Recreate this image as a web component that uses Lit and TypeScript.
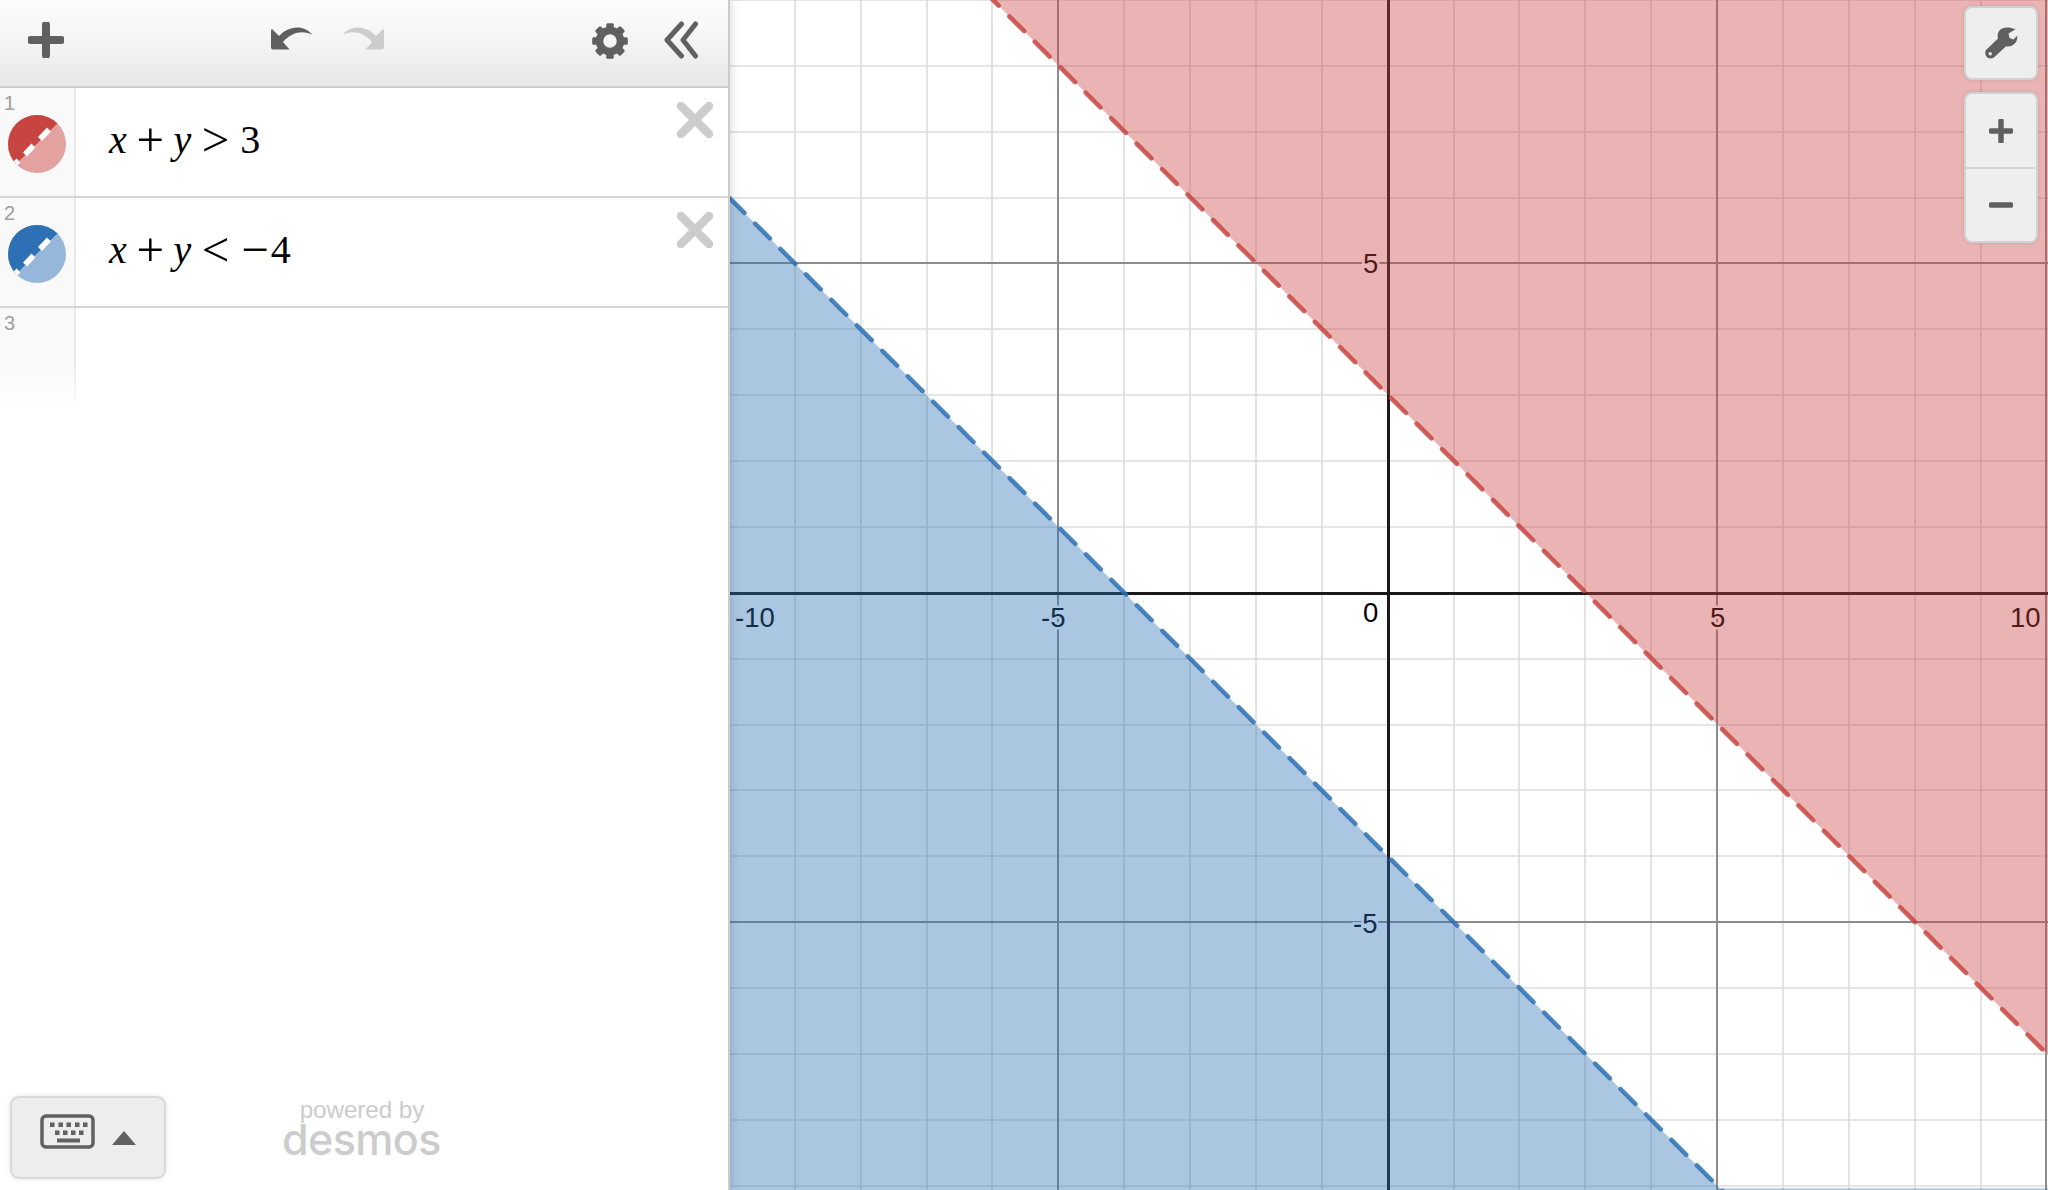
import { LitElement, css, html, svg } from 'lit'
import { customElement } from 'lit/decorators.js'

// graph coordinates -> page pixels (the svg viewBox is in page pixels too)
const OX = 1387.7
const OY = 592.8
const UNIT = 65.87
const px = (x: number) => Math.round(OX + x * UNIT)
const py = (y: number) => Math.round(OY - y * UNIT)

const range = (a: number, b: number) => {
  const out: number[] = []
  for (let i = a; i <= b; i++) out.push(i)
  return out
}

const swatch = (dark: string, light: string, id: string) => html`
  <svg class="swatch" width="58" height="58" viewBox="0 0 58 58">
    <defs><clipPath id=${id}><circle cx="29" cy="29" r="29"></circle></clipPath></defs>
    <g clip-path="url(#${id})">
      <rect width="58" height="58" fill=${light}></rect>
      <path d="M0 0H58L0 57Z" fill=${dark}></path>
      <path d="M41 14.5L32 24M25.5 30.5L17 39.5M10.5 45.5L2 54" stroke="#fff" stroke-width="5.5" fill="none"></path>
    </g>
  </svg>
`

const closeIcon = html`
  <svg class="close" width="36" height="36" viewBox="0 0 36 36">
    <path d="M4 4L32 32M32 4L4 32" stroke="#ccc" stroke-width="8.5" stroke-linecap="round"></path>
  </svg>
`

@customElement('app-root')
export class AppRoot extends LitElement {
  static styles = css`
    :host {
      display: flex;
      width: 100%;
      height: 1190px;
      overflow: hidden;
      background: #fff;
      font-family: "Liberation Sans", Arial, sans-serif;
    }
    .panel {
      position: relative;
      z-index: 2;
      width: 730px;
      flex: none;
      box-sizing: border-box;
      display: flex;
      flex-direction: column;
      background: #fff;
      border-right: 2px solid #ccc;
      box-shadow: 0 0 10px rgba(0, 0, 0, 0.18);
    }
    .header {
      height: 88px;
      flex: none;
      box-sizing: border-box;
      display: flex;
      align-items: center;
      padding-left: 28px;
      background: linear-gradient(#fdfdfd, #f5f5f5 45%, #e8e8e8);
      border-bottom: 2px solid #ccc;
    }
    .header svg {
      display: block;
      flex: none;
    }
    .add { margin-right: 207px; margin-top: -6px; }
    .undo { margin-right: 29px; margin-top: -11px; }
    .redo { margin-right: 208px; margin-top: -11px; }
    .gear { margin-right: 35.5px; margin-top: -5px; }
    .chev { margin-top: -6px; }

    .row {
      height: 110px;
      flex: none;
      box-sizing: border-box;
      display: flex;
      border-bottom: 2px solid #d6d6d6;
    }
    .gutter {
      width: 76px;
      flex: none;
      box-sizing: border-box;
      padding: 6px 0 0 4px;
      background: #f9f9f9;
      border-right: 2px solid #e8e8e8;
    }
    .num {
      font-size: 20px;
      line-height: 19px;
      color: #a0a0a0;
    }
    .swatch {
      display: block;
      margin: 2px 0 0 4px;
    }
    .row.last {
      height: 100px;
      border-bottom: none;
    }
    .row.last .gutter {
      background: linear-gradient(#f9f9f9 55%, #fff);
      border-image: linear-gradient(#e8e8e8 55%, #fff) 1;
    }
    .expr {
      flex: 1;
      display: flex;
      justify-content: space-between;
      padding: 24px 15px 0 33px;
    }
    .math {
      display: flex;
      align-items: baseline;
      font-family: "Liberation Serif", "Times New Roman", serif;
      font-size: 40px;
      line-height: 1;
      color: #000;
    }
    .math i { font-style: italic; }
    /* operators sit a little lower than Times puts them */
    .math b { font-weight: 400; font-size: 49px; transform: translateY(3px); }
    .close {
      display: block;
      margin-top: -10px;
    }
    .ml-plus { margin-left: 9.7px; }
    .ml-y { margin-left: 9.5px; }
    .ml-rel { margin-left: 10.3px; }
    .ml-three { margin-left: 11px; }
    .ml-minus { margin-left: 12.3px; }
    .ml-four { margin-left: 1.4px; }

    .footer {
      margin-top: auto;
      display: flex;
      align-items: flex-end;
      padding: 0 0 11px 10px;
    }
    .keys {
      width: 156px;
      height: 83px;
      box-sizing: border-box;
      display: flex;
      align-items: center;
      justify-content: center;
      padding-bottom: 11px;
      background: #ededed;
      border: 2px solid #d9d9d9;
      border-radius: 9px;
      box-shadow: 0 0 6px rgba(0, 0, 0, 0.1);
    }
    .brand {
      margin: 0 0 23px 116px;
      width: 158px;
      text-align: center;
      color: #ccc;
    }
    .brand .by {
      font-size: 24.3px;
      line-height: 24px;
      letter-spacing: -0.1px;
      padding-left: 2px;
    }
    .brand .name {
      font-family: Inter, "Liberation Sans", sans-serif;
      font-size: 43px;
      font-weight: 500;
      line-height: 34px;
      letter-spacing: -0.6px;
    }

    .graph {
      position: relative;
      flex: 1;
      overflow: hidden;
    }
    .graph > svg {
      display: block;
    }
    .minor { stroke: #dcdcdc; stroke-width: 1.6; }
    .major { stroke: #8c8c8c; stroke-width: 2; }
    .axis { stroke: #1a1a1a; stroke-width: 3; }
    .label {
      font-family: "Liberation Sans", Arial, sans-serif;
      font-size: 27.5px;
      fill: #000;
      stroke: #fff;
      stroke-width: 5px;
      paint-order: stroke;
    }
    .tools {
      position: absolute;
      top: 6px;
      right: 10px;
      width: 74px;
      display: flex;
      flex-direction: column;
      gap: 12px;
    }
    .tool {
      box-sizing: border-box;
      background: #eee;
      border: 2px solid #d2d2d2;
      border-radius: 8px;
      box-shadow: 0 0 4px rgba(0, 0, 0, 0.1);
    }
    .tool button {
      display: flex;
      align-items: center;
      justify-content: center;
      width: 100%;
      padding: 0;
      border: none;
      background: none;
    }
    .tool button + button {
      border-top: 2px solid #d6d6d6;
    }
    .wrench { height: 70px; }
    .zoom { height: 73px; }
    .zoom + .zoom { height: 74px; }
  `

  private graph() {
    const minorX = range(-9, 9).filter((i) => i % 5 !== 0)
    const minorY = range(-9, 9).filter((i) => i % 5 !== 0)
    return html`
      <svg width="1318" height="1190" viewBox="730 0 1318 1190">
        ${minorX.map((i) => svg`<line class="minor" x1=${px(i)} x2=${px(i)} y1="0" y2="1190"></line>`)}
        ${minorY.map((i) => svg`<line class="minor" x1="730" x2="2048" y1=${py(i)} y2=${py(i)}></line>`)}
        ${[-5, 5, 10].map((i) => svg`<line class="major" x1=${px(i)} x2=${px(i)} y1="0" y2="1190"></line>`)}
        ${[-5, 5].map((i) => svg`<line class="major" x1="730" x2="2048" y1=${py(i)} y2=${py(i)}></line>`)}
        <line class="axis" x1="730" x2="2048" y1="593.5" y2="593.5"></line>
        <line class="axis" x1="1388.5" x2="1388.5" y1="0" y2="1190"></line>

        <text class="label" x="735" y="627">-10</text>
        <text class="label" x="1041" y="627">-5</text>
        <text class="label" x="1710" y="627">5</text>
        <text class="label" x="2010" y="627">10</text>
        <text class="label" x="1363" y="622">0</text>
        <text class="label" x="1363" y="273">5</text>
        <text class="label" x="1353" y="933">-5</text>

        <path d="M993 0H2048V1055Z" fill="#c74440" fill-opacity="0.4"></path>
        <path d="M730 198.5L1721.5 1190H730Z" fill="#2d70b3" fill-opacity="0.4"></path>
        <rect x="1718" y="1188.4" width="330" height="1.6" fill="#2d70b3" fill-opacity="0.4"></rect>
        <path d="M983.84 -9.16L2060 1067" stroke="#c74440" stroke-opacity="0.85" stroke-width="4.5" stroke-linecap="round" stroke-dasharray="21 15" fill="none"></path>
        <path d="M704.12 172.62L1740 1208.5" stroke="#2d70b3" stroke-opacity="0.85" stroke-width="4.5" stroke-linecap="round" stroke-dasharray="21 15" fill="none"></path>
      </svg>
    `
  }

  render() {
    return html`
      <div class="panel">
        <div class="header">
          <svg class="add" width="36" height="36" viewBox="0 0 36 36">
            <path d="M18 3V33M3 18H33" stroke="#606060" stroke-width="8" stroke-linecap="round"></path>
          </svg>
          <svg class="undo" width="42" height="24" viewBox="0 0 42 24">
            <path d="M1 3L8 10C15 2 31 -4 41.5 9C32 4 21 6 12 16L18.5 23.4H2Q0 23.4 0 21.4V4Z" fill="#606060"></path>
          </svg>
          <svg class="redo" width="42" height="24" viewBox="0 0 42 24">
            <path transform="matrix(-1 0 0 1 42 0)" d="M1 3L8 10C15 2 31 -4 41.5 9C32 4 21 6 12 16L18.5 23.4H2Q0 23.4 0 21.4V4Z" fill="#ccc"></path>
          </svg>
          <svg class="gear" width="36" height="36" viewBox="-18 -18 36 36">
            <circle r="10.5" fill="none" stroke="#606060" stroke-width="7.5"></circle>
            ${range(0, 7).map((i) => svg`<rect x="-3.8" y="-17.8" width="7.6" height="7" rx="1.5" fill="#606060" transform="rotate(${i * 45})"></rect>`)}
          </svg>
          <svg class="chev" width="36" height="38" viewBox="0 0 36 38">
            <path d="M17.5 3L3 19L17.5 35M31.5 3L19 19L31.5 35" fill="none" stroke="#606060" stroke-width="5" stroke-linecap="round" stroke-linejoin="round"></path>
          </svg>
        </div>

        <div class="row">
          <div class="gutter">
            <div class="num">1</div>
            ${swatch('#c74440', '#e3a19f', 'clip-red')}
          </div>
          <div class="expr">
            <div class="math">
              <i>x</i><b class="ml-plus">+</b><i class="ml-y">y</i><b class="ml-rel">&gt;</b><span class="ml-three">3</span>
            </div>
            ${closeIcon}
          </div>
        </div>
        <div class="row">
          <div class="gutter">
            <div class="num">2</div>
            ${swatch('#2d70b3', '#96b7d9', 'clip-blue')}
          </div>
          <div class="expr">
            <div class="math">
              <i>x</i><b class="ml-plus">+</b><i class="ml-y">y</i><b class="ml-rel">&lt;</b><b class="ml-minus">−</b><span class="ml-four">4</span>
            </div>
            ${closeIcon}
          </div>
        </div>
        <div class="row last">
          <div class="gutter"><div class="num">3</div></div>
        </div>

        <div class="footer">
          <div class="keys">
            <svg width="97" height="36" viewBox="0 0 97 36">
              <rect x="2" y="2" width="51" height="31" rx="4" fill="none" stroke="#606060" stroke-width="3.5"></rect>
              ${[10, 18.5, 26.5, 35, 43].map((x) => svg`<rect x=${x} y="8.5" width="4.5" height="4.5" fill="#606060"></rect>`)}
              ${[15, 23, 31, 39].map((x) => svg`<rect x=${x} y="16.5" width="4.5" height="4.5" fill="#606060"></rect>`)}
              <rect x="17" y="24.5" width="23" height="4" fill="#606060"></rect>
              <path d="M72 31L84 17L96 31Z" fill="#606060"></path>
            </svg>
          </div>
          <div class="brand">
            <div class="by">powered by</div>
            <div class="name">desmos</div>
          </div>
        </div>
      </div>

      <div class="graph">
        ${this.graph()}
        <div class="tools">
          <div class="tool">
            <button class="wrench">
              <svg width="33" height="33" viewBox="0 0 33 33">
                <path fill-rule="evenodd" fill="#606060" d="M1.5 22.5L13 11.5C11.5 6 14.5 1 21 .5C24 .3 27 1 30.5 2.3L23.5 6.5L24.5 11L28.5 12.5L32.3 8.5C33 16 27 20.5 21 19.3L9 30.5C6 32.5 2 31.5 .8 28.5C0 26 0 24 1.5 22.5ZM5.2 25.1A1.7 1.7 0 1 0 5.2 28.5A1.7 1.7 0 1 0 5.2 25.1Z"></path>
              </svg>
            </button>
          </div>
          <div class="tool">
            <button class="zoom">
              <svg width="24" height="24" viewBox="0 0 24 24">
                <path d="M12 2V22M2 12H22" stroke="#606060" stroke-width="5.5" stroke-linecap="round"></path>
              </svg>
            </button>
            <button class="zoom">
              <svg width="24" height="6" viewBox="0 0 24 6">
                <path d="M2 3H22" stroke="#606060" stroke-width="5.5" stroke-linecap="round"></path>
              </svg>
            </button>
          </div>
        </div>
      </div>
    `
  }
}
